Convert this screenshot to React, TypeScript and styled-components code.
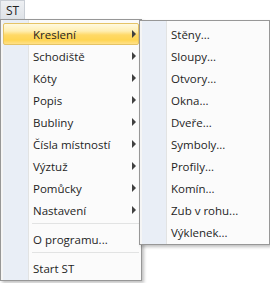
import React from "react";
import styled, { createGlobalStyle } from "styled-components";

const Global = createGlobalStyle`
  html, body { margin: 0; padding: 0; background: #ffffff; }
  body { font-family: "Open Sans", "Noto Sans", sans-serif; font-size: 11.5px; color: #1e1e1e; }
`;

const Page = styled.div`
  position: relative;
  width: 270px;
  height: 283px;
  overflow: hidden;
`;

const MenuBar = styled.div`
  display: flex;
  height: 19px;
`;

const BarButton = styled.div`
  width: 25px;
  height: 19px;
  box-sizing: border-box;
  display: flex;
  align-items: center;
  justify-content: center;
  background: linear-gradient(#eef0f3, #dfe3e8);
  border: 1px solid #c9ced5;
  border-bottom: none;
  font-size: 12px;
  color: #222;
`;

const Menu = styled.div<{ $left: number; $top: number; $w: number; $gutter: number; $padTop: number }>`
  position: absolute;
  left: ${(p) => p.$left}px;
  top: ${(p) => p.$top}px;
  width: ${(p) => p.$w}px;
  box-sizing: border-box;
  border: 1px solid #979797;
  background: linear-gradient(
    to right,
    #f5f5f5 0,
    #f5f5f5 2px,
    #e9eef6 2px,
    #e9eef6 ${(p) => p.$gutter}px,
    #e2e3e3 ${(p) => p.$gutter}px,
    #e2e3e3 ${(p) => p.$gutter + 1}px,
    #fbfbfb ${(p) => p.$gutter + 1}px
  );
  box-shadow: 2px 2px 3px rgba(0, 0, 0, 0.25);
  padding: ${(p) => p.$padTop}px 2px 1px 2px;
  display: flex;
  flex-direction: column;
`;

const Item = styled.div<{ $active?: boolean; $indent: number }>`
  position: relative;
  flex: 0 0 22px;
  height: 22px;
  box-sizing: border-box;
  display: flex;
  align-items: center;
  padding-left: ${(p) => p.$indent}px;
  border: 1px solid ${(p) => (p.$active ? "#e5c365" : "transparent")};
  border-radius: 2px;
  background: ${(p) =>
    p.$active
      ? "linear-gradient(#fff9e0 0%, #ffefb2 35%, #ffd966 55%, #ffd552 80%, #ffe18a 100%)"
      : "transparent"};
  color: #1e1e1e;
  white-space: nowrap;
`;

const Arrow = styled.span`
  position: absolute;
  right: 2px;
  top: 6px;
  width: 0;
  height: 0;
  border-top: 4px solid transparent;
  border-bottom: 4px solid transparent;
  border-left: 4px solid #404040;
`;

const Separator = styled.div<{ $indent: number }>`
  flex: 0 0 1px;
  height: 1px;
  margin: 2px 0 4px ${(p) => p.$indent}px;
  background: #e2e3e3;
`;

const mainItems = [
  "Kreslení",
  "Schodiště",
  "Kóty",
  "Popis",
  "Bubliny",
  "Čísla místností",
  "Výztuž",
  "Pomůcky",
  "Nastavení",
];

const subItems = [
  "Stěny...",
  "Sloupy...",
  "Otvory...",
  "Okna...",
  "Dveře...",
  "Symboly...",
  "Profily...",
  "Komín...",
  "Zub v rohu...",
  "Výklenek...",
];

export default function App() {
  return (
    <Page>
      <Global />
      <MenuBar>
        <BarButton>ST</BarButton>
      </MenuBar>
      <Menu $left={0} $top={19} $w={142} $gutter={27} $padTop={3}>
        {mainItems.map((t, i) => (
          <Item key={t} $active={i === 0} $indent={29}>
            {t}
            <Arrow />
          </Item>
        ))}
        <Separator $indent={29} />
        <Item $indent={29}>O programu...</Item>
        <Separator $indent={29} />
        <Item $indent={29}>Start ST</Item>
      </Menu>
      <Menu $left={139} $top={20} $w={131} $gutter={26} $padTop={2}>
        {subItems.map((t) => (
          <Item key={t} $indent={28}>
            {t}
          </Item>
        ))}
      </Menu>
    </Page>
  );
}
